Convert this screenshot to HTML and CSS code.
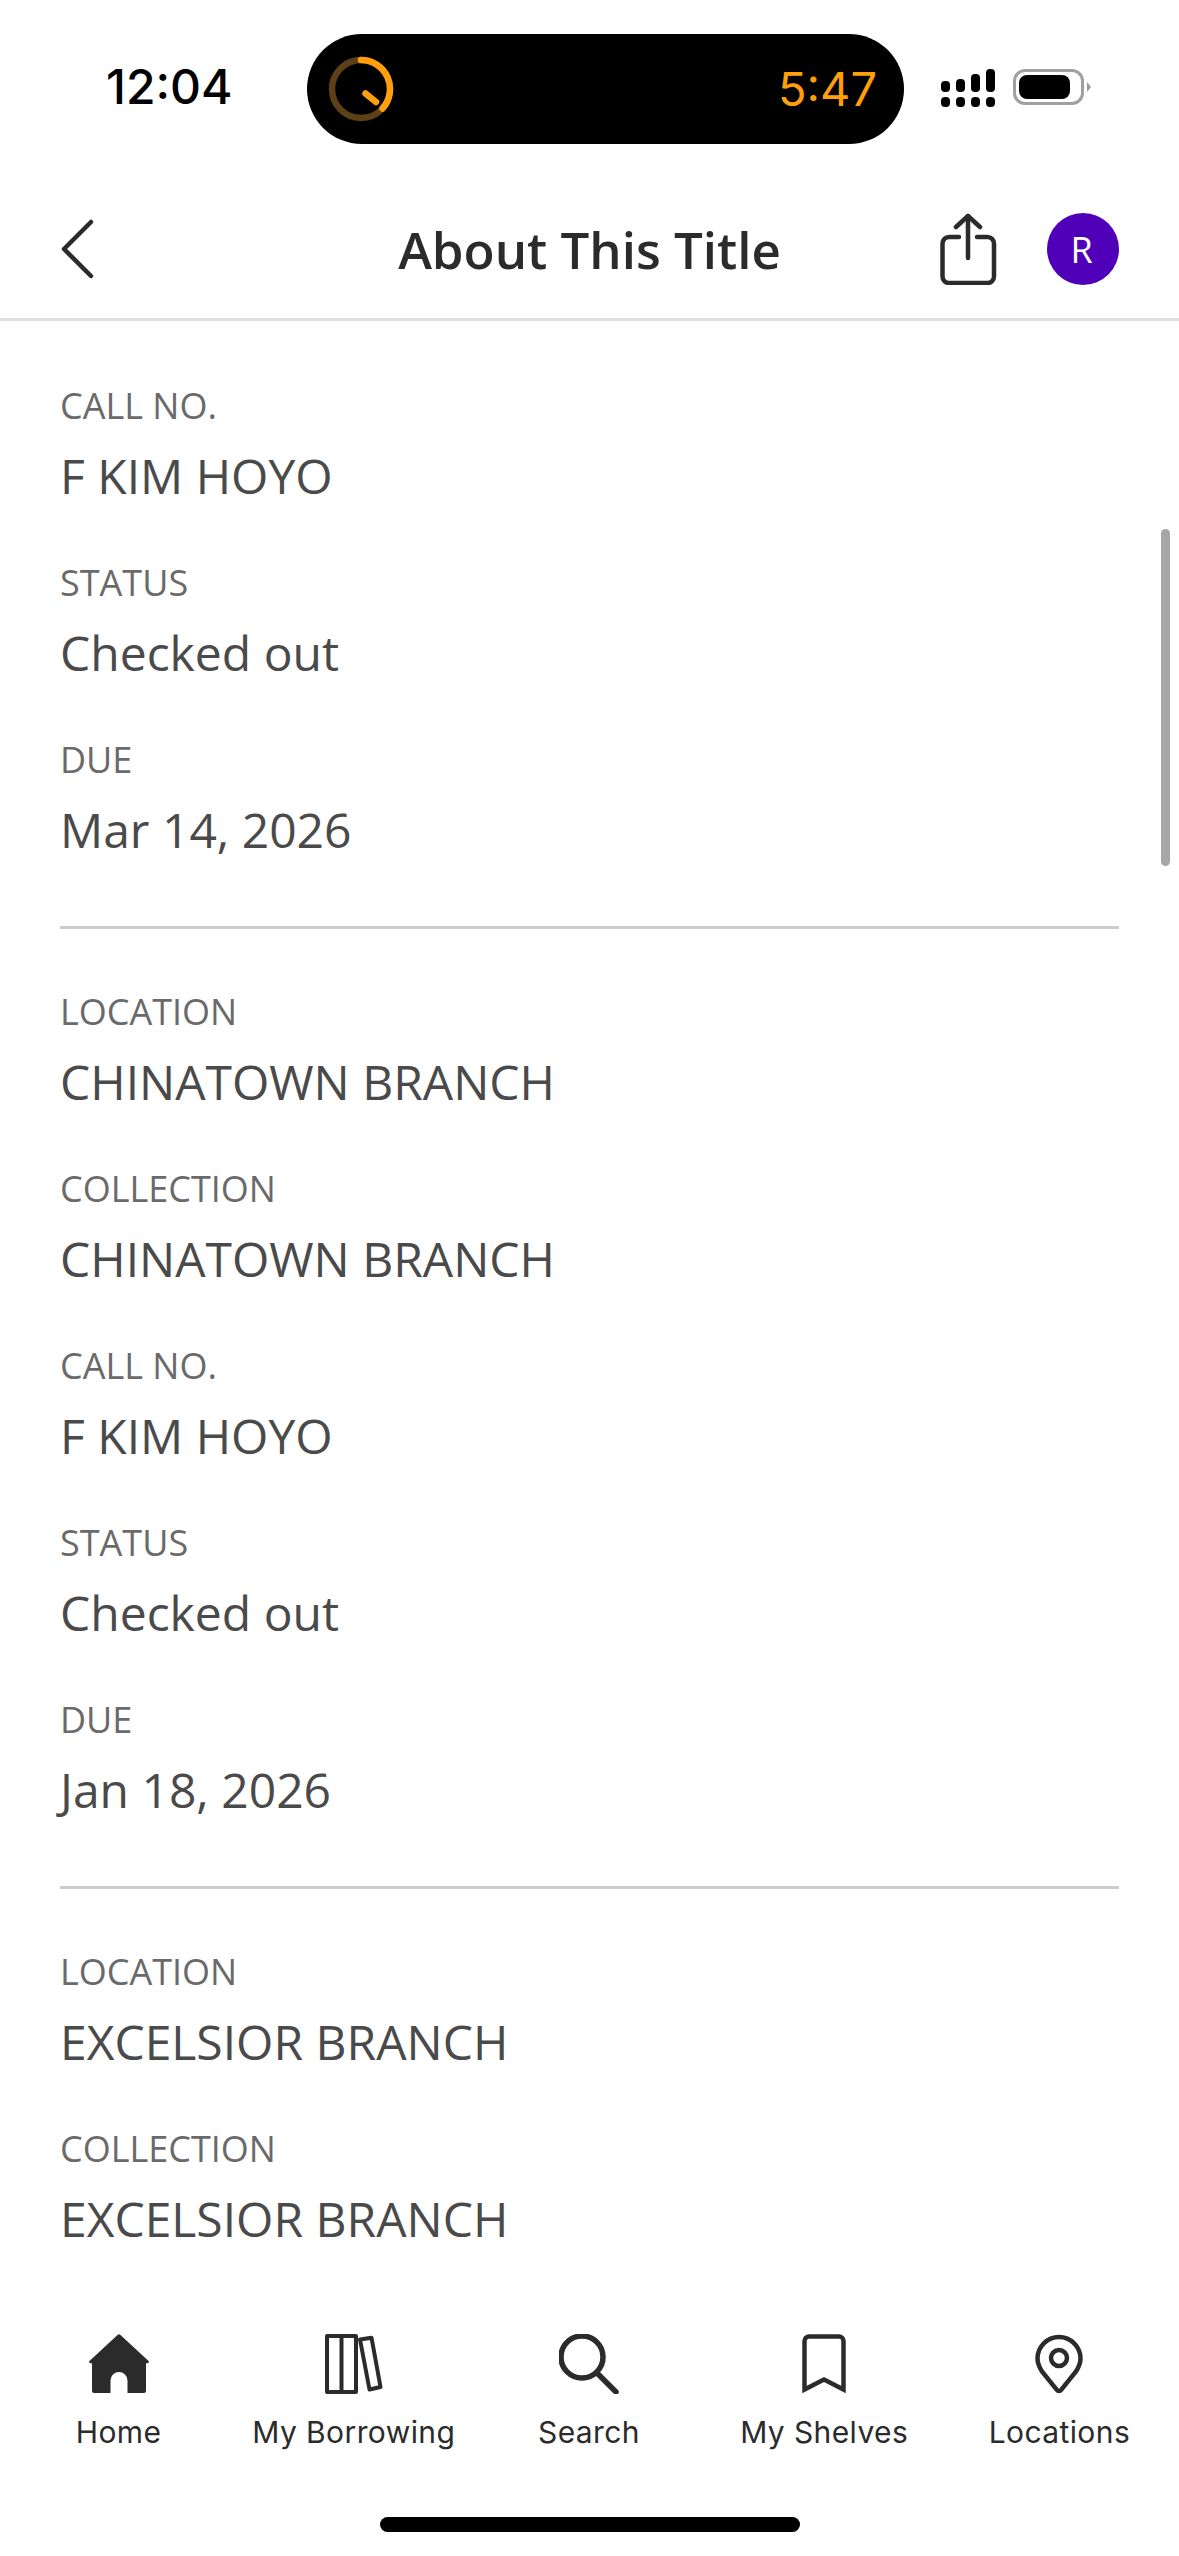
FILE: index.html
```html
<!DOCTYPE html>
<html lang="en">
<head>
    <meta charset="UTF-8">
    <meta name="viewport" content="width=device-width, initial-scale=1.0">
    <title>About This Title</title>
    <link rel="stylesheet" href="styles.css">
</head>
<body>
    <div class="app">
        <div class="status-bar">
            <div class="clock">12:04</div>
            <div class="island">
                <svg class="timer-ring" viewBox="0 0 66 66" fill="none" stroke-width="6.5" stroke-linecap="round">
                    <circle cx="33" cy="33" r="29" stroke="#5c4018"/>
                    <path d="M33 4A29 29 0 0 1 54.5 52.5" stroke="#ff9f0a"/>
                    <path d="M37.5 37.5L48 46" stroke="#ff9f0a"/>
                </svg>
                <span class="timer-text">5:47</span>
            </div>
            <div class="signal">
                <div class="signal-col"><i class="bar-1"></i><i class="dot"></i></div>
                <div class="signal-col"><i class="bar-2"></i><i class="dot"></i></div>
                <div class="signal-col"><i class="bar-3"></i><i class="dot"></i></div>
                <div class="signal-col"><i class="bar-4"></i><i class="dot"></i></div>
            </div>
            <div class="battery">
                <div class="battery-body"><div class="battery-fill"></div></div>
                <div class="battery-cap"></div>
            </div>
        </div>

        <header class="top-bar">
            <div class="top-left">
                <svg class="back-icon" viewBox="0 0 36 60" fill="none" stroke="#2b2b2b" stroke-width="4.5" stroke-linecap="round" stroke-linejoin="round">
                    <path d="M31 3L4 30L31 57"/>
                </svg>
            </div>
            <h1 class="page-title">About This Title</h1>
            <div class="top-right">
                <svg class="share-icon" viewBox="0 0 60 72" fill="none" stroke="#2b2b2b" stroke-width="4.5" stroke-linecap="round" stroke-linejoin="round">
                    <path d="M20 24H10a6.5 6.5 0 0 0-6.5 6.5V63.500a6.500 6.500 0 0 0 6.500 6.500H48.500a6.500 6.500 0 0 0 6.500-6.500V30.500a6.500 6.500 0 0 0-6.500-6.500H38"/>
                    <path d="M29 3V45"/>
                    <path d="M17 14L29 3L41 14"/>
                </svg>
                <div class="avatar">R</div>
            </div>
        </header>

        <main class="content">
            <section class="copy">
                <div class="row"><div class="label">CALL NO.</div><div class="value">F KIM HOYO</div></div>
                <div class="row"><div class="label">STATUS</div><div class="value">Checked out</div></div>
                <div class="row"><div class="label">DUE</div><div class="value">Mar 14, 2026</div></div>
            </section>
            <section class="copy">
                <div class="row"><div class="label">LOCATION</div><div class="value">CHINATOWN BRANCH</div></div>
                <div class="row"><div class="label">COLLECTION</div><div class="value">CHINATOWN BRANCH</div></div>
                <div class="row"><div class="label">CALL NO.</div><div class="value">F KIM HOYO</div></div>
                <div class="row"><div class="label">STATUS</div><div class="value">Checked out</div></div>
                <div class="row"><div class="label">DUE</div><div class="value">Jan 18, 2026</div></div>
            </section>
            <section class="copy">
                <div class="row"><div class="label">LOCATION</div><div class="value">EXCELSIOR BRANCH</div></div>
                <div class="row"><div class="label">COLLECTION</div><div class="value">EXCELSIOR BRANCH</div></div>
            </section>
            <div class="scroll-thumb"></div>
        </main>

        <nav class="tab-bar">
            <div class="tab">
                <svg class="tab-icon" viewBox="0 0 60 60">
                    <path fill="#2b2b2b" d="M28.500 1a2.200 2.200 0 0 1 3 0L59 26.500a1.500 1.500 0 0 1-1 2.800H57V57a2 2 0 0 1-2 2H38.500V46.500a8.500 8.500 0 0 0-17 0V59H5a2 2 0 0 1-2-2V29.300H2a1.500 1.500 0 0 1-1-2.800z"/>
                </svg>
                <span class="tab-label">Home</span>
            </div>
            <div class="tab">
                <svg class="tab-icon" viewBox="0 0 60 60" fill="none" stroke="#2b2b2b" stroke-width="4" stroke-linejoin="round">
                    <rect x="3" y="2" width="29" height="56"/>
                    <path d="M17.500 2V58"/>
                    <path d="M36 5.500L47.500 3.700L56.500 53L45.500 55.500z"/>
                </svg>
                <span class="tab-label">My Borrowing</span>
            </div>
            <div class="tab">
                <svg class="tab-icon" viewBox="0 0 60 60" fill="none" stroke="#2b2b2b" stroke-width="5.500" stroke-linecap="round">
                    <circle cx="23" cy="23" r="21"/>
                    <path d="M38 39L57 58"/>
                </svg>
                <span class="tab-label">Search</span>
            </div>
            <div class="tab">
                <svg class="tab-icon" viewBox="0 0 60 60" fill="none" stroke="#2b2b2b" stroke-width="4.500">
                    <path d="M10.500 55.500V7a4.500 4.500 0 0 1 4.500-4.500H45a4.500 4.500 0 0 1 4.500 4.500V55.500L30 45.500z"/>
                </svg>
                <span class="tab-label">My Shelves</span>
            </div>
            <div class="tab">
                <svg class="tab-icon" viewBox="0 0 60 60" fill="none" stroke="#2b2b2b" stroke-width="4.500">
                    <path d="M30 3a21.500 21.500 0 0 1 21.500 21.500c0 5-2 9-4.500 13L32 56a2.400 2.400 0 0 1-4 0L13 37.500c-2.500-4-4.500-8-4.500-13A21.500 21.500 0 0 1 30 3z"/>
                    <circle cx="30" cy="24" r="8"/>
                </svg>
                <span class="tab-label">Locations</span>
            </div>
        </nav>

        <div class="home-indicator"></div>
    </div>
</body>
</html>
```

FILE: styles.css
```css
* {
    margin: 0;
    padding: 0;
    box-sizing: border-box;
}

body {
    font-family: "Open Sans", sans-serif;
    background: #fff;
    overflow: hidden;
}

.app {
    display: flex;
    flex-direction: column;
    width: 1179px;
    height: 2556px;
}

/* status bar */
.status-bar {
    display: flex;
    align-items: center;
    flex-shrink: 0;
    height: 180px;
    padding: 34px 0 36px 106px;
}

.clock {
    width: 201px;
    margin-bottom: 4px;
    font-family: "Inter", sans-serif;
    font-size: 48px;
    font-weight: 500;
    color: #000;
    line-height: 1;
}

.island {
    display: flex;
    align-items: center;
    justify-content: space-between;
    width: 597px;
    height: 110px;
    padding: 0 27px 0 22px;
    background: #000;
    border-radius: 55px;
}

.timer-ring {
    width: 66px;
    height: 66px;
    margin-left: -1px;
}

.timer-text {
    margin-bottom: 2px;
    font-family: "Inter", sans-serif;
    font-size: 47px;
    color: #ff9f0a;
    line-height: 1;
}

.signal {
    display: flex;
    gap: 6px;
    height: 39px;
    margin: 0 0 4px 37px;
}

.signal-col {
    display: flex;
    flex-direction: column;
    justify-content: flex-end;
    gap: 5px;
    width: 9px;
}

.signal-col i {
    display: block;
    background: #000;
    border-radius: 4px;
}

.signal-col .dot { height: 10px; }
.signal-col .bar-1 { height: 11px; }
.signal-col .bar-2 { height: 13px; }
.signal-col .bar-3 { height: 18px; }
.signal-col .bar-4 { height: 23px; }

.battery {
    display: flex;
    align-items: center;
    gap: 3px;
    margin: 0 0 4px 18px;
}

.battery-body {
    width: 71px;
    height: 36px;
    padding: 3px;
    border: 3px solid #a0a0a0;
    border-radius: 12px;
}

.battery-fill {
    width: 51px;
    height: 24px;
    background: #000;
    border-radius: 8px;
}

.battery-cap {
    width: 0;
    height: 0;
    border-top: 5px solid transparent;
    border-bottom: 5px solid transparent;
    border-left: 4px solid #999;
}

/* header */
.top-bar {
    display: grid;
    grid-template-columns: 1fr auto 1fr;
    align-items: center;
    flex-shrink: 0;
    height: 141px;
    padding: 0 60px;
    border-bottom: 3px solid #e0e0e0;
}

.back-icon {
    display: block;
    width: 36px;
    height: 60px;
}

.page-title {
    font-size: 51px;
    font-weight: 600;
    color: #2b2b2b;
}

.top-right {
    display: flex;
    align-items: center;
    justify-content: flex-end;
    gap: 48px;
}

.share-icon {
    width: 60px;
    height: 72px;
}

.avatar {
    display: flex;
    align-items: center;
    justify-content: center;
    width: 72px;
    height: 72px;
    padding-right: 3px;
    font-size: 36px;
    color: #fff;
    background: #5000b9;
    border-radius: 50%;
}

/* details list */
.content {
    position: relative;
    flex: 1;
    min-height: 0;
    padding-top: 2px;
    overflow: hidden;
}

.copy {
    margin: 0 60px;
    padding: 58px 0 63px;
    border-bottom: 3px solid #ccc;
}

.copy:last-of-type {
    border-bottom: none;
}

.row {
    margin-bottom: 49px;
}

.row:last-child {
    margin-bottom: 0;
}

.label {
    margin-bottom: 12px;
    font-size: 36px;
    line-height: 50px;
    color: #6a6a6a;
}

.value {
    font-size: 48px;
    line-height: 66px;
    color: #4a4a4a;
}

.scroll-thumb {
    position: absolute;
    top: 208px;
    right: 9px;
    width: 9px;
    height: 337px;
    background: #a6a6a6;
    border-radius: 5px;
}

/* bottom tabs */
.tab-bar {
    display: grid;
    grid-template-columns: repeat(5, 1fr);
    flex-shrink: 0;
    padding: 34px 2px 0 1px;
    background: #fff;
}

.tab {
    display: flex;
    flex-direction: column;
    align-items: center;
    gap: 18px;
}

.tab-icon {
    display: block;
    width: 60px;
    height: 60px;
}

.tab-label {
    font-family: "Inter", sans-serif;
    font-size: 30px;
    line-height: 40px;
    letter-spacing: 0.4px;
    color: #2b2b2b;
}

.home-indicator {
    flex-shrink: 0;
    width: 420px;
    height: 15px;
    margin: 65px auto 24px;
    background: #000;
    border-radius: 8px;
}
```
